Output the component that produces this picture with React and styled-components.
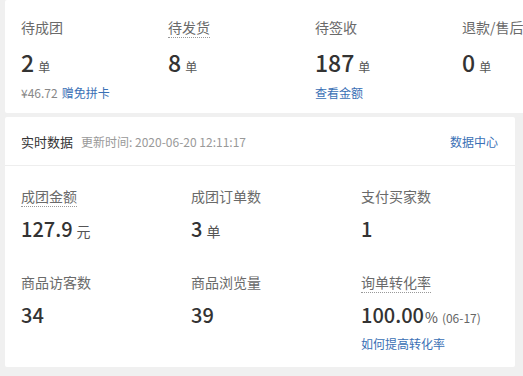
import React from 'react';
import styled, { createGlobalStyle } from 'styled-components';

const GlobalStyle = createGlobalStyle`
  body {
    margin: 0;
    background: #f0f0f0;
    font-family: "Noto Sans CJK SC", "Noto Sans", sans-serif;
    color: #333;
  }
`;

const Page = styled.div`
  width: 523px;
  height: 376px;
  overflow: hidden;
  padding-left: 5px;
  box-sizing: border-box;
  display: flex;
  flex-direction: column;
  gap: 4px;
`;

const Card = styled.div`
  background: #fff;
  border-radius: 2px;
  width: ${p => p.$width}px;
  height: ${p => p.$height}px;
  box-sizing: border-box;
  flex-shrink: 0;
`;

const StatRow = styled.div`
  display: flex;
  padding: 17px 0 0 16px;
`;

const Stat = styled.div`
  width: 147px;
  flex-shrink: 0;
  display: flex;
  flex-direction: column;
  align-items: flex-start;
`;

const Label = styled.span`
  font-size: 14px;
  line-height: 20px;
  color: #6a6a6a;
  white-space: nowrap;
  border-bottom: 1px dotted ${p => (p.$tip ? '#999' : 'transparent')};
`;

const Value = styled.div`
  margin-top: ${p => p.$gap}px;
  line-height: 28px;
  font-size: ${p => p.$size}px;
  font-weight: 500;
  color: #333;
  white-space: nowrap;
`;

const Unit = styled.span`
  font-size: ${p => p.$size || 12}px;
  font-weight: 400;
  color: #555;
  margin-left: ${p => (p.$tight ? 1 : 4)}px;
`;

const Note = styled.span`
  font-size: 12px;
  font-weight: 400;
  color: #666;
  margin-left: 4px;
`;

const Sub = styled.div`
  margin-top: 3px;
  font-size: 12px;
  line-height: 18px;
  color: #888;
  white-space: nowrap;
`;

const Link = styled.a`
  color: #3a70b5;
  font-size: 12px;
  text-decoration: none;
  margin-left: ${p => p.$ml || 0}px;
`;

const Header = styled.div`
  height: 48px;
  border-bottom: 1px solid #eee;
  display: flex;
  align-items: center;
  padding: 0 17px 0 16px;
`;

const HeaderTitle = styled.span`
  font-size: 13px;
  color: #333;
`;

const HeaderTime = styled.span`
  font-size: 12px;
  color: #999;
  margin-left: 8px;
  flex: 1;
`;

const Grid = styled.div`
  display: grid;
  grid-template-columns: repeat(3, 170px);
  row-gap: 27px;
  padding: 20px 0 0 16px;
`;

const top = [
  { label: '待成团', value: '2', extra: true },
  { label: '待发货', value: '8', tip: true },
  { label: '待签收', value: '187', link: '查看金额' },
  { label: '退款/售后', value: '0' },
];

const live = [
  { label: '成团金额', value: '127.9', unit: '元', tip: true },
  { label: '成团订单数', value: '3', unit: '单' },
  { label: '支付买家数', value: '1' },
  { label: '商品访客数', value: '34' },
  { label: '商品浏览量', value: '39' },
  { label: '询单转化率', value: '100.00', unit: '%', tight: true, note: '(06-17)', tip: true, link: '如何提高转化率' },
];

export default function App() {
  return (
    <>
      <GlobalStyle />
      <Page>
        <Card $width={560} $height={113}>
          <StatRow>
            {top.map(s => (
              <Stat key={s.label}>
                <Label $tip={s.tip}>{s.label}</Label>
                <Value $gap={10} $size={23}>
                  {s.value}
                  <Unit>单</Unit>
                </Value>
                {s.extra && (
                  <Sub>
                    ¥46.72<Link $ml={4}>赠免拼卡</Link>
                  </Sub>
                )}
                {s.link && (
                  <Sub>
                    <Link>{s.link}</Link>
                  </Sub>
                )}
              </Stat>
            ))}
          </StatRow>
        </Card>
        <Card $width={510} $height={250}>
          <Header>
            <HeaderTitle>实时数据</HeaderTitle>
            <HeaderTime>更新时间: 2020-06-20 12:11:17</HeaderTime>
            <Link>数据中心</Link>
          </Header>
          <Grid>
            {live.map(s => (
              <Stat key={s.label}>
                <Label $tip={s.tip}>{s.label}</Label>
                <Value $gap={8} $size={20}>
                  {s.value}
                  {s.unit && <Unit $size={14} $tight={s.tight}>{s.unit}</Unit>}
                  {s.note && <Note>{s.note}</Note>}
                </Value>
                {s.link && (
                  <Sub>
                    <Link>{s.link}</Link>
                  </Sub>
                )}
              </Stat>
            ))}
          </Grid>
        </Card>
      </Page>
    </>
  );
}
